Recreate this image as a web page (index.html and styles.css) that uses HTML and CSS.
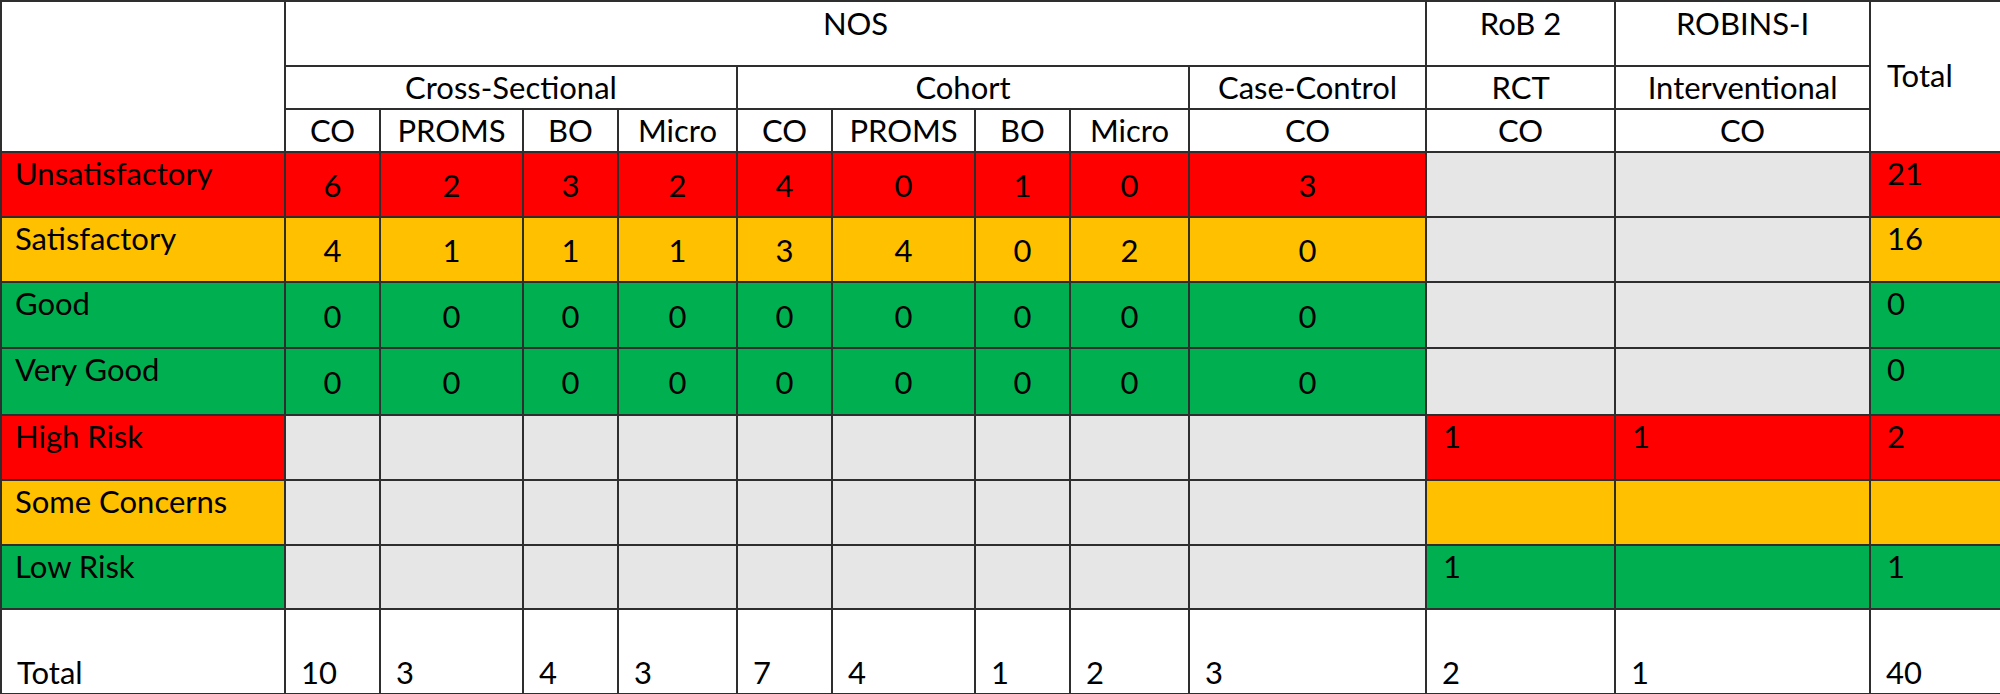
FILE: index.html
```html
<!DOCTYPE html>
<html lang="en">
<head>
<meta charset="utf-8">
<title>Quality assessment summary</title>
<link rel="stylesheet" href="styles.css">
</head>
<body>
<table class="summary">
  <colgroup>
    <col class="c-label">
    <col class="c-sm"><col class="c-md"><col class="c-sm"><col class="c-mc">
    <col class="c-sm"><col class="c-md"><col class="c-sm"><col class="c-mc">
    <col class="c-cc"><col class="c-rct"><col class="c-int"><col class="c-tot">
  </colgroup>
  <thead>
    <tr class="r-top">
      <th class="blank" rowspan="3"></th>
      <th class="hdr top" colspan="9">NOS</th>
      <th class="hdr top">RoB 2</th>
      <th class="hdr top">ROBINS-I</th>
      <th class="hdr total-h" rowspan="3">Total</th>
    </tr>
    <tr class="r-sub">
      <th class="hdr" colspan="4">Cross-Sectional</th>
      <th class="hdr" colspan="4">Cohort</th>
      <th class="hdr">Case-Control</th>
      <th class="hdr">RCT</th>
      <th class="hdr">Interventional</th>
    </tr>
    <tr class="r-sub">
      <th class="hdr">CO</th><th class="hdr">PROMS</th><th class="hdr">BO</th><th class="hdr">Micro</th>
      <th class="hdr">CO</th><th class="hdr">PROMS</th><th class="hdr">BO</th><th class="hdr">Micro</th>
      <th class="hdr">CO</th><th class="hdr">CO</th><th class="hdr">CO</th>
    </tr>
  </thead>
  <tbody>
    <tr class="r-65">
      <th class="lbl red">Unsatisfactory</th>
      <td class="num red">6</td><td class="num red">2</td><td class="num red">3</td><td class="num red">2</td>
      <td class="num red">4</td><td class="num red">0</td><td class="num red">1</td><td class="num red">0</td>
      <td class="num red">3</td>
      <td class="grey"></td><td class="grey"></td>
      <td class="side red">21</td>
    </tr>
    <tr class="r-65">
      <th class="lbl amber">Satisfactory</th>
      <td class="num amber">4</td><td class="num amber">1</td><td class="num amber">1</td><td class="num amber">1</td>
      <td class="num amber">3</td><td class="num amber">4</td><td class="num amber">0</td><td class="num amber">2</td>
      <td class="num amber">0</td>
      <td class="grey"></td><td class="grey"></td>
      <td class="side amber">16</td>
    </tr>
    <tr class="r-66">
      <th class="lbl green">Good</th>
      <td class="num green">0</td><td class="num green">0</td><td class="num green">0</td><td class="num green">0</td>
      <td class="num green">0</td><td class="num green">0</td><td class="num green">0</td><td class="num green">0</td>
      <td class="num green">0</td>
      <td class="grey"></td><td class="grey"></td>
      <td class="side green">0</td>
    </tr>
    <tr class="r-67">
      <th class="lbl green">Very Good</th>
      <td class="num green">0</td><td class="num green">0</td><td class="num green">0</td><td class="num green">0</td>
      <td class="num green">0</td><td class="num green">0</td><td class="num green">0</td><td class="num green">0</td>
      <td class="num green">0</td>
      <td class="grey"></td><td class="grey"></td>
      <td class="side green">0</td>
    </tr>
    <tr class="r-65">
      <th class="lbl red">High Risk</th>
      <td class="grey"></td><td class="grey"></td><td class="grey"></td><td class="grey"></td>
      <td class="grey"></td><td class="grey"></td><td class="grey"></td><td class="grey"></td>
      <td class="grey"></td>
      <td class="side red">1</td><td class="side red">1</td>
      <td class="side red">2</td>
    </tr>
    <tr class="r-65">
      <th class="lbl amber">Some Concerns</th>
      <td class="grey"></td><td class="grey"></td><td class="grey"></td><td class="grey"></td>
      <td class="grey"></td><td class="grey"></td><td class="grey"></td><td class="grey"></td>
      <td class="grey"></td>
      <td class="side amber"></td><td class="side amber"></td>
      <td class="side amber"></td>
    </tr>
    <tr class="r-64">
      <th class="lbl green">Low Risk</th>
      <td class="grey"></td><td class="grey"></td><td class="grey"></td><td class="grey"></td>
      <td class="grey"></td><td class="grey"></td><td class="grey"></td><td class="grey"></td>
      <td class="grey"></td>
      <td class="side green">1</td><td class="side green"></td>
      <td class="side green">1</td>
    </tr>
    <tr class="r-total">
      <th class="lbl-total">Total</th>
      <td class="tot">10</td><td class="tot">3</td><td class="tot">4</td><td class="tot">3</td>
      <td class="tot">7</td><td class="tot">4</td><td class="tot">1</td><td class="tot">2</td>
      <td class="tot">3</td>
      <td class="tot">2</td><td class="tot">1</td>
      <td class="tot">40</td>
    </tr>
  </tbody>
</table>
</body>
</html>
```
FILE: styles.css
```css
html, body {
  margin: 0;
  padding: 0;
  background: #ffffff;
}

.summary {
  border-collapse: collapse;
  table-layout: fixed;
  width: 2000px;
  font-family: Lato, "Noto Sans", sans-serif;
  font-size: 31px;
  line-height: 1.2;
  color: #000000;
}

.summary th,
.summary td {
  border: 2px solid #2e2e2e;
  padding: 0;
  font-weight: normal;
  overflow: hidden;
  white-space: nowrap;
}

.c-label { width: 284px; }
.c-sm    { width: 95px; }
.c-md    { width: 143px; }
.c-mc    { width: 119px; }
.c-cc    { width: 237px; }
.c-rct   { width: 189px; }
.c-int   { width: 255px; }
.c-tot   { width: 133px; }

.r-top   { height: 65px; }
.r-sub   { height: 43px; }
.r-64    { height: 64px; }
.r-65    { height: 65px; }
.r-66    { height: 66px; }
.r-67    { height: 67px; }
.r-total { height: 85px; }

.summary .blank { background: #ffffff; }

.summary .hdr {
  text-align: center;
  vertical-align: middle;
  background: #ffffff;
}

.summary .hdr.top {
  vertical-align: top;
  padding-top: 3px;
}

.summary .hdr.total-h {
  text-align: left;
  padding-left: 16px;
  padding-bottom: 2px;
}

.summary .lbl {
  text-align: left;
  vertical-align: top;
  padding: 2px 0 0 13px;
}

.summary .num {
  text-align: center;
  vertical-align: middle;
  padding-top: 3px;
}

.summary .side {
  text-align: left;
  vertical-align: top;
  padding: 2px 0 0 16px;
}

.summary .lbl-total,
.summary .tot {
  text-align: left;
  vertical-align: bottom;
  background: #ffffff;
  padding: 0 0 2px 15px;
}

.summary .red   { background: #ff0000; }
.summary .amber { background: #ffc000; }
.summary .green { background: #00b050; }
.summary .grey  { background: #e6e6e6; }
```
